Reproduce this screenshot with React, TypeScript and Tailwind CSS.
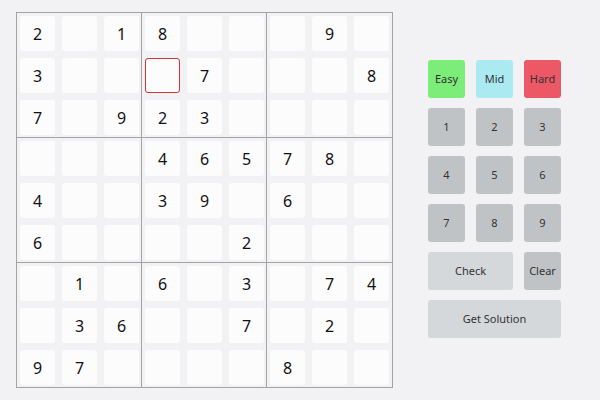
import React from "react";

const B: (number | null)[][] = [
  [2, null, 1, 8, null, null, null, 9, null],
  [3, null, null, null, 7, null, null, null, 8],
  [7, null, 9, 2, 3, null, null, null, null],
  [null, null, null, 4, 6, 5, 7, 8, null],
  [4, null, null, 3, 9, null, 6, null, null],
  [6, null, null, null, null, 2, null, null, null],
  [null, 1, null, 6, null, 3, null, 7, 4],
  [null, 3, 6, null, null, 7, null, 2, null],
  [9, 7, null, null, null, null, 8, null, null],
];

function Box({ br, bc }: { br: number; bc: number }) {
  const cells = [];
  for (let r = 0; r < 3; r++) {
    for (let c = 0; c < 3; c++) {
      const R = br * 3 + r;
      const C = bc * 3 + c;
      const v = B[R][C];
      const sel = R === 1 && C === 3;
      cells.push(
        <div
          key={`${r}-${c}`}
          className={
            sel
              ? "w-[35px] h-[35px] rounded-[3px] bg-[#fdfcfd] border border-[#d4343f] flex items-center justify-center"
              : "w-[35px] h-[35px] rounded-[3px] bg-[#fdfcfd] flex items-center justify-center text-[16px] text-[#111]"
          }
        >
          {v ?? ""}
        </div>
      );
    }
  }
  return (
    <div
      className={
        "w-[125px] pl-[3px] pt-[3px] grid grid-cols-[35px_35px_35px] grid-rows-[35px_35px_35px] gap-[7px] " +
        (bc < 2 ? "border-r border-[#a4a4a4] " : "") +
        (br < 2 ? "border-b border-[#a4a4a4] h-[125px] " : "h-[124px] ")
      }
    >
      {cells}
    </div>
  );
}

function Btn({ label, cls }: { label: string; cls: string }) {
  return (
    <div
      className={
        "h-[38px] rounded-[3px] flex items-center justify-center text-[11px] text-[#333] " + cls
      }
    >
      {label}
    </div>
  );
}

export default function App() {
  return (
    <div
      className="w-[600px] h-[400px] bg-[#f2f1f3] flex items-start"
      style={{ fontFamily: '"Noto Sans", "Open Sans", sans-serif' }}
    >
      <div className="ml-[16px] mt-[12px] border border-[#a4a4a4] grid grid-cols-[125px_125px_125px]">
        {[0, 1, 2].map((br) =>
          [0, 1, 2].map((bc) => <Box key={`${br}${bc}`} br={br} bc={bc} />)
        )}
      </div>
      <div className="ml-[35px] mt-[60px] grid grid-cols-[37px_37px_37px] gap-x-[11px] gap-y-[10px]">
        <Btn label="Easy" cls="bg-[#7ded7a]" />
        <Btn label="Mid" cls="bg-[#aceaf1]" />
        <Btn label="Hard" cls="bg-[#ec5866]" />
        {[1, 2, 3, 4, 5, 6, 7, 8, 9].map((n) => (
          <Btn key={n} label={String(n)} cls="bg-[#bfc3c6]" />
        ))}
        <Btn label="Check" cls="col-span-2 bg-[#d5d8da]" />
        <Btn label="Clear" cls="bg-[#bfc3c6]" />
        <Btn label="Get Solution" cls="col-span-3 bg-[#d5d8da]" />
      </div>
    </div>
  );
}
